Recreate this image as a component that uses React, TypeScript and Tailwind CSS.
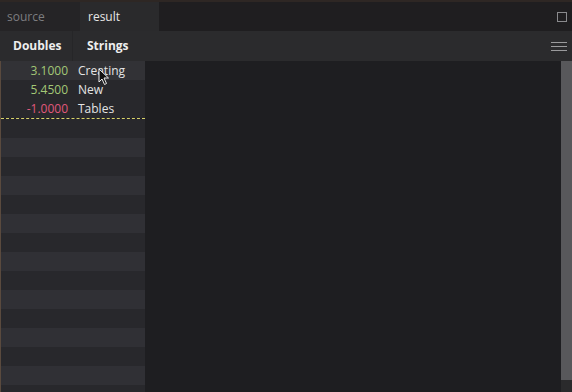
const rows = [
  { v: '3.1000', s: 'Creating', neg: false },
  { v: '5.4500', s: 'New', neg: false },
  { v: '-1.0000', s: 'Tables', neg: true },
];

function Cursor() {
  return (
    <svg className="absolute left-[98px] top-[68px]" width="12" height="18" viewBox="0 0 12 18">
      <path d="M1 1 L1 14 L4 11 L6.5 16.5 L8.5 15.5 L6 10 L10.5 10 Z" fill="#111" stroke="#eee" strokeWidth="1" />
    </svg>
  );
}

export default function App() {
  const filler = Array.from({ length: 15 }, (_, i) => i);
  return (
    <div
      className="w-[572px] h-[392px] overflow-hidden bg-[#1e1e21] flex flex-col text-[12px] relative"
      style={{ fontFamily: '"Open Sans", "Noto Sans", sans-serif' }}
    >
      {/* tab bar */}
      <div className="h-[31px] shrink-0 flex items-stretch bg-[#1f1e20] border-t-2 border-[#2e2724]">
        <div className="w-[80px] bg-[#252426] text-[#7d7d80] pl-[7px] flex items-center">source</div>
        <div className="w-[79px] bg-[#2a2a2c] text-[#e6e6e6] pl-[8px] flex items-center">result</div>
        <div className="flex-1" />
        <div className="flex items-center pr-[5px]">
          <div className="w-[10px] h-[10px] border border-[#8a8a8d]" />
        </div>
      </div>

      {/* header */}
      <div className="h-[30px] shrink-0 bg-[#2b2b2d] flex items-center font-bold text-[#eeeeee]">
        <div className="w-[73px] pl-[13px] h-full flex items-center border-r border-[#262628]">Doubles</div>
        <div className="w-[71px] pl-[14px]">Strings</div>
        <div className="flex-1" />
        <div className="flex flex-col gap-[3px] pr-[5px]">
          <div className="w-[16px] h-px bg-[#9a9a9c]" />
          <div className="w-[16px] h-px bg-[#9a9a9c]" />
          <div className="w-[16px] h-px bg-[#9a9a9c]" />
        </div>
      </div>

      {/* body */}
      <div className="flex-1 flex min-h-0 overflow-hidden">
        <div className="w-[145px] flex flex-col border-l border-[#5a4a3e]">
          {rows.map((r, i) => (
            <div
              key={i}
              className={`h-[19px] shrink-0 flex items-center ${i === 0 ? 'bg-[#323236]' : 'bg-[#28282c]'}`}
            >
              <div className={`w-[67px] text-right ${r.neg ? 'text-[#e0587c]' : 'text-[#a3c776]'}`}>{r.v}</div>
              <div className="pl-[10px] text-[#e4e4e4]">{r.s}</div>
            </div>
          ))}
          <div className="shrink-0 border-t border-dashed border-t-[#d8d26a]" />
          {filler.map((i) => (
            <div key={i} className={`h-[19px] shrink-0 ${i % 2 === 0 ? 'bg-[#28282c]' : 'bg-[#303035]'}`} />
          ))}
        </div>
        <div className="flex-1" />
        <div className="w-[11px] flex flex-col">
          <div className="flex-1 bg-[#58585b]" />
          <div className="h-[12px] bg-[#2a2a2c]" />
        </div>
      </div>
      <Cursor />
    </div>
  );
}
